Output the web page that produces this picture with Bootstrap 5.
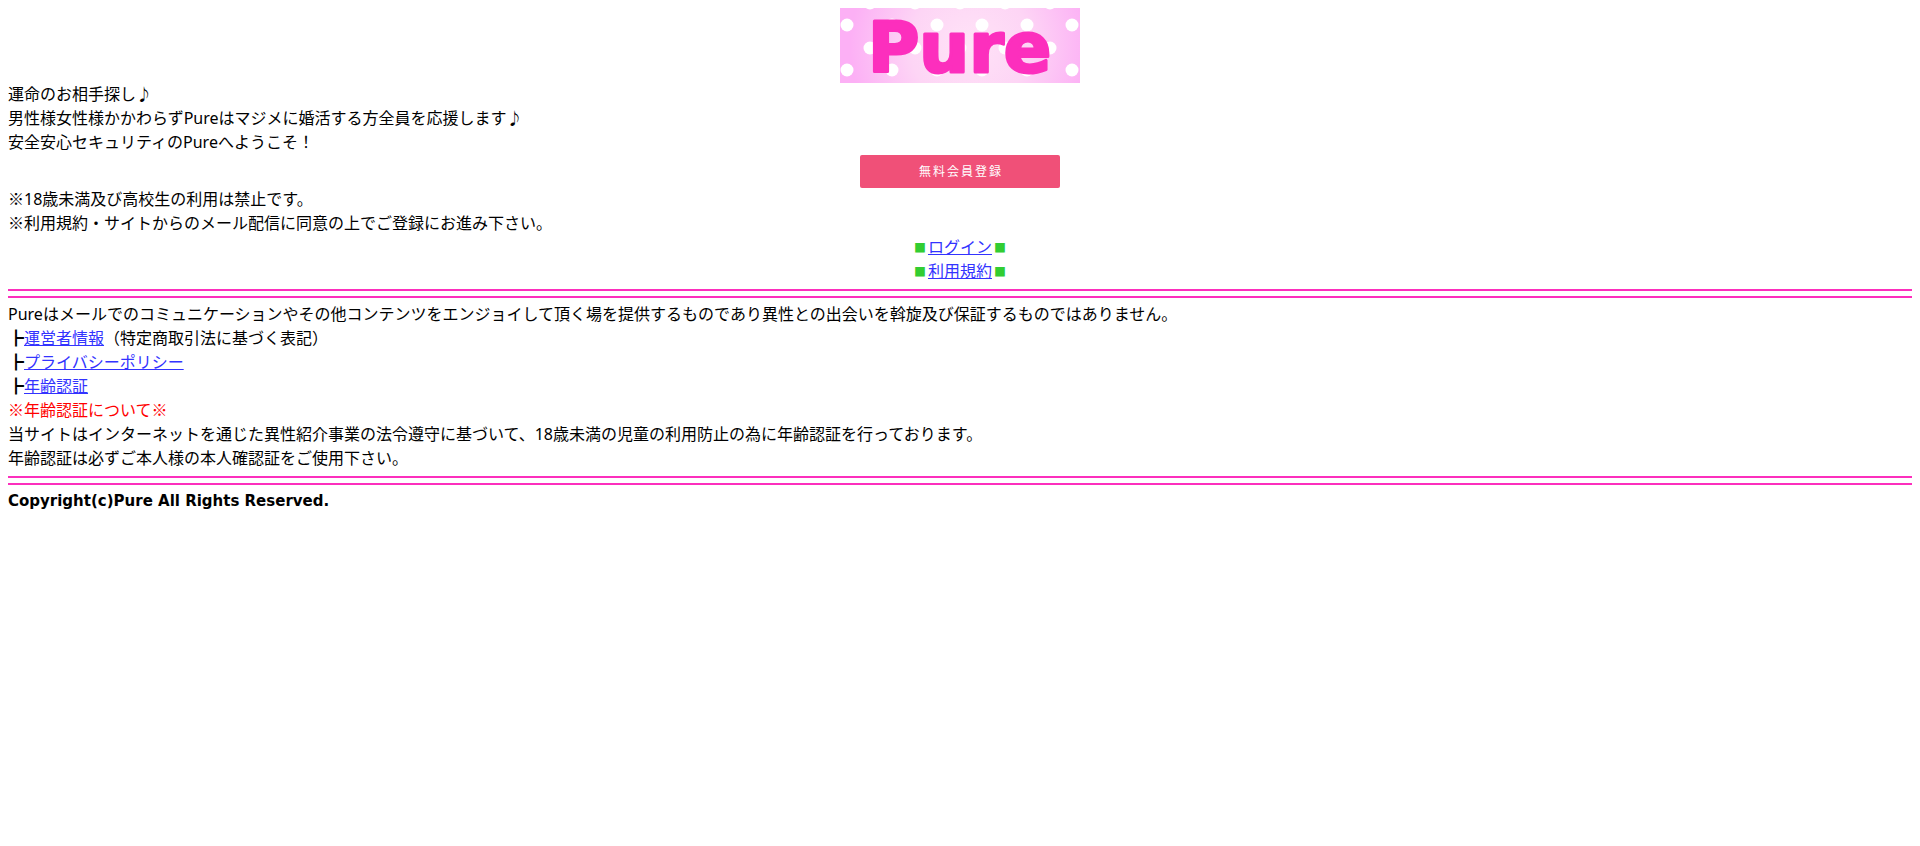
<!DOCTYPE html>
<html lang="ja">
<head>
<meta charset="utf-8">
<meta name="viewport" content="width=device-width, initial-scale=1">
<title>Pure</title>
<link href="https://cdn.jsdelivr.net/npm/bootstrap@5.3.0/dist/css/bootstrap.min.css" rel="stylesheet">
<style>
body { font-family: "Noto Sans", "Noto Sans CJK JP", sans-serif; font-size: 16px; line-height: 24px; color: #000; background: #fff; padding: 8px; }
main { margin-top: -1px; }
a { color: #33f; text-decoration: underline; }
.logo { width: 240px; height: 75px; overflow: visible; }
.logo text { font-family: "DejaVu Sans", sans-serif; font-weight: 700; font-size: 70px; fill: #fc2fbd; stroke: #fc2fbd; stroke-width: 3px; stroke-linejoin: round; }
.signup { margin: 1px 0 -1px; }
.register { width: 200px; height: 33px; padding: 0 0 0 2px; border: 0; border-radius: 2px; background: #f05078; color: #fff; font-size: 12px; letter-spacing: 2px; line-height: 33px; }
.register:hover { background: #d9406a; color: #fff; }
.square { display: inline-block; width: 16px; color: #32cd32; font-size: 12px; line-height: 16px; text-align: center; }
.branch { display: inline-block; width: 16px; }
.kome { font-family: "Noto Sans CJK JP", sans-serif; line-height: 1; }
.double-rule { height: 9px; margin: 6px 0 4px; border: solid #fc2fbd; border-width: 2px 0; opacity: 1; }
.notice { color: #f00; }
footer { font-family: "DejaVu Sans", sans-serif; font-size: 15px; }
</style>
</head>
<body>
<header class="d-flex justify-content-center">
<svg class="logo d-block" viewBox="0 0 240 75" role="img" aria-label="Pure">
<defs>
<radialGradient id="glow" gradientUnits="userSpaceOnUse" cx="130" cy="38" r="120"><stop offset="0" stop-color="#ffe3f7"/><stop offset=".5" stop-color="#fdd5f5"/><stop offset="1" stop-color="#fcb0f5"/></radialGradient>
<clipPath id="frame"><rect width="240" height="75"/></clipPath>
</defs>
<rect width="240" height="75" fill="url(#glow)"/>
<g fill="#fff" clip-path="url(#frame)"><circle cx="7" cy="17" r="6.5"/><circle cx="52" cy="17" r="6.5"/><circle cx="97" cy="17" r="6.5"/><circle cx="142" cy="17" r="6.5"/><circle cx="187" cy="17" r="6.5"/><circle cx="232" cy="17" r="6.5"/><circle cx="30" cy="40" r="6.5"/><circle cx="75" cy="40" r="6.5"/><circle cx="120" cy="40" r="6.5"/><circle cx="165" cy="40" r="6.5"/><circle cx="210" cy="40" r="6.5"/><circle cx="7" cy="62" r="6.5"/><circle cx="52" cy="62" r="6.5"/><circle cx="97" cy="62" r="6.5"/><circle cx="142" cy="62" r="6.5"/><circle cx="187" cy="62" r="6.5"/><circle cx="232" cy="62" r="6.5"/><circle cx="30" cy="-5" r="6.5"/><circle cx="75" cy="-5" r="6.5"/><circle cx="120" cy="-5" r="6.5"/><circle cx="165" cy="-5" r="6.5"/><circle cx="210" cy="-5" r="6.5"/></g>
<text x="28" y="64">Pure</text>
</svg>
</header>
<main>
<div>運命のお相手探し♪</div>
<div>男性様女性様かかわらずPureはマジメに婚活する方全員を応援します♪</div>
<div>安全安心セキュリティのPureへようこそ！</div>
<form class="signup d-flex justify-content-center"><button type="button" class="btn register">無料会員登録</button></form>
<div><span class="kome">※</span>18歳未満及び高校生の利用は禁止です。</div>
<div><span class="kome">※</span>利用規約・サイトからのメール配信に同意の上でご登録にお進み下さい。</div>
<nav class="text-center">
<div><span class="square">■</span><a href="#">ログイン</a><span class="square">■</span></div>
<div><span class="square">■</span><a href="#">利用規約</a><span class="square">■</span></div>
</nav>
<hr class="double-rule">
<div>Pureはメールでのコミュニケーションやその他コンテンツをエンジョイして頂く場を提供するものであり異性との出会いを斡旋及び保証するものではありません。</div>
<div><span class="branch">┣</span><a href="#">運営者情報</a>（特定商取引法に基づく表記）</div>
<div><span class="branch">┣</span><a href="#">プライバシーポリシー</a></div>
<div><span class="branch">┣</span><a href="#">年齢認証</a></div>
<div class="notice"><span class="kome">※</span>年齢認証について<span class="kome">※</span></div>
<div>当サイトはインターネットを通じた異性紹介事業の法令遵守に基づいて、18歳未満の児童の利用防止の為に年齢認証を行っております。</div>
<div>年齢認証は必ずご本人様の本人確認証をご使用下さい。</div>
<hr class="double-rule">
</main>
<footer class="fw-bold">Copyright(c)Pure All Rights Reserved.</footer>
<script src="https://cdn.jsdelivr.net/npm/bootstrap@5.3.0/dist/js/bootstrap.bundle.min.js"></script>
</body>
</html>
